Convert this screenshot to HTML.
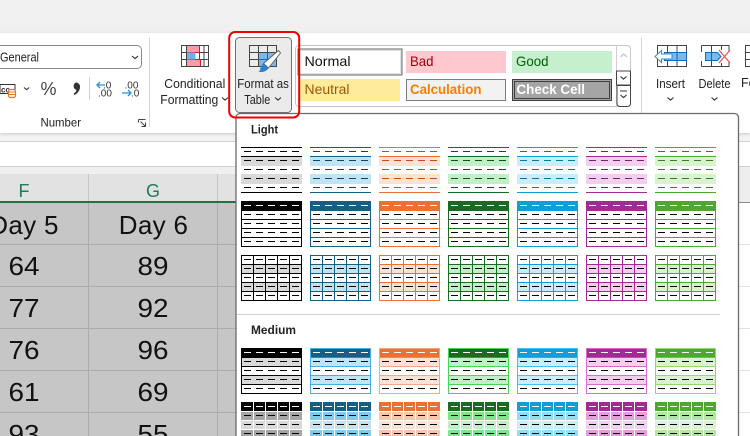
<!DOCTYPE html>
<html>
<head>
<meta charset="utf-8">
<style>
html,body{margin:0;padding:0;background:#fff;width:750px;height:436px;overflow:hidden}
svg{display:block}
text{font-family:"Liberation Sans",sans-serif;fill:#222;font-size:12.5px}
.big{font-size:26px;fill:#111;text-anchor:middle;letter-spacing:.3px}
.num{font-size:26px;fill:#111;text-anchor:middle}
.hd{font-size:18px;fill:#217a5a;text-anchor:middle}
.mid{text-anchor:middle}
.k{font-size:10px}
.st{font-size:14px}
.c1{--a:#000;--b:#d9d9d9;--d:#000;--c:#000;--e:#a6a6a6}
.c2{--a:#156082;--b:#c1e4f5;--d:#0f4761;--c:#45b0e1;--e:#83cbeb}
.c3{--a:#e97132;--b:#fbe2d5;--d:#c04f15;--c:#f1a983;--e:#f6c6ad}
.c4{--a:#196b24;--b:#c1f0c8;--d:#124f1a;--c:#47d459;--e:#83e28e}
.c5{--a:#0f9ed5;--b:#caedfb;--d:#0b769f;--c:#45c0f0;--e:#95dcf7}
.c6{--a:#a02b93;--b:#f2ceef;--d:#77206d;--c:#d86dcd;--e:#e59edc}
.c7{--a:#4ea72e;--b:#d9f2d0;--d:#3a7c22;--c:#8ed973;--e:#b4e5a2}
.ch{fill:none;stroke:#333;stroke-width:1.1}
.ds{stroke-dasharray:7 5;fill:none}
</style>
</head>
<body>
<svg width="750" height="436" viewBox="0 0 750 436" xmlns="http://www.w3.org/2000/svg">
<defs>
<filter id="sh" x="-5%" y="-5%" width="110%" height="110%"><feDropShadow dx="0" dy="1" stdDeviation="1.5" flood-color="#000" flood-opacity=".18"/></filter>
<g id="s1">
  <rect x="0" y="9" width="61" height="10" style="fill:var(--b)"/>
  <rect x="0" y="27" width="61" height="10" style="fill:var(--b)"/>
  <path d="M0 .5H61M0 9.5H61M0 45.5H61" fill="none" style="stroke:var(--a)"/>
  <path class="ds" d="M3 4.5H58M3 13.5H58M3 22.5H58M3 31.5H58M3 40.5H58" style="stroke:var(--d)"/>
</g>
<g id="s2">
  <rect x=".5" y=".5" width="60" height="45" fill="#fff" style="stroke:var(--a)"/>
  <rect x="0" y="0" width="61" height="10" style="fill:var(--a)"/>
  <path d="M0 18.5H61M0 27.5H61M0 36.5H61" fill="none" style="stroke:var(--a)"/>
  <path class="ds" d="M3 4.5H58" stroke="#fff"/>
  <path class="ds" d="M3 13.5H58M3 22.5H58M3 31.5H58M3 40.5H58" stroke="#000"/>
</g>
<g id="s3">
  <rect x=".5" y=".5" width="60" height="45" fill="#fff" style="stroke:var(--a)"/>
  <rect x="0" y="9" width="61" height="9" style="fill:var(--b)"/>
  <rect x="0" y="27" width="61" height="9" style="fill:var(--b)"/>
  <path d="M.5 .5H60.5V45.5H.5ZM0 9.5H61M0 18.5H61M0 27.5H61M0 36.5H61M12.5 0V46M24.5 0V46M36.5 0V46M48.5 0V46" fill="none" style="stroke:var(--a)"/>
  <path class="ds" d="M3 4.5H58M3 13.5H58M3 22.5H58M3 31.5H58M3 40.5H58" stroke="#000"/>
</g>
<g id="m1">
  <rect x=".5" y=".5" width="60" height="45" fill="#fff"/>
  <rect x="0" y="10" width="61" height="9" style="fill:var(--b)"/>
  <rect x="0" y="27" width="61" height="10" style="fill:var(--b)"/>
  <path d="M.5 .5H60.5V45.5H.5ZM0 18.5H61M0 27.5H61M0 36.5H61M0 9.5H61" fill="none" style="stroke:var(--c)"/>
  <rect x="1" y="1" width="59" height="8.5" style="fill:var(--a)"/>
  <path class="ds" d="M3 4.5H58" stroke="#fff"/>
  <path class="ds" d="M3 13.5H58M3 22.5H58M3 31.5H58M3 40.5H58" stroke="#000"/>
</g>
<g id="m2">
  <rect x="0" y="0" width="61" height="10" style="fill:var(--a)"/>
  <rect x="0" y="10" width="61" height="9" style="fill:var(--e)"/>
  <rect x="0" y="19" width="61" height="9" style="fill:var(--b)"/>
  <rect x="0" y="28" width="61" height="8" style="fill:var(--e)"/>
  <path d="M0 9.5H61M0 18.5H61M0 27.5H61M12.5 0V36M24.5 0V36M36.5 0V36M48.5 0V36" fill="none" stroke="#fff"/>
  <path class="ds" d="M3 4.5H58" stroke="#fff"/>
  <path class="ds" d="M3 13.5H58M3 22.5H58M3 31.5H58" stroke="#000"/>
</g>
</defs>

<!-- base -->
<rect width="750" height="436" fill="#fff"/>
<rect width="750" height="33" fill="#f0f0f0"/>
<rect y="133" width="750" height="8" fill="#f3f3f3"/>
<rect y="141" width="750" height="1" fill="#d0d0d0"/>
<rect y="166" width="750" height="1" fill="#d0d0d0"/>
<rect y="167" width="750" height="7" fill="#f0f0f0"/>
<rect y="174" width="750" height="28" fill="#e2e2e2"/>
<rect x="739" y="167" width="11" height="35" fill="#eee"/>
<rect x="739" y="202" width="11" height="1" fill="#8a8a8a"/>
<path d="M739 244.5H750M739 286.5H750M739 328.5H750M739 370.5H750M739 412.5H750" stroke="#e2e2e2"/>
<path d="M88.5 174V202M217.5 174V202" stroke="#c6c6c6"/>
<rect y="203" width="236" height="233" fill="#c6c6c6"/>
<rect y="201" width="236" height="2" fill="#217346"/>
<path d="M88.5 203V436M217.5 203V436M0 244.5H236M0 286.5H236M0 328.5H236M0 370.5H236M0 412.5H236" stroke="#adadad"/>
<text class="hd" x="24" y="197">F</text>
<text class="hd" x="153" y="197">G</text>
<text class="big" x="24" y="234">Day 5</text>
<text class="big" x="153.5" y="234">Day 6</text>
<text class="num" x="24" y="275" textLength="31" lengthAdjust="spacingAndGlyphs">64</text><text class="num" x="153" y="275" textLength="31" lengthAdjust="spacingAndGlyphs">89</text>
<text class="num" x="24" y="317" textLength="31" lengthAdjust="spacingAndGlyphs">77</text><text class="num" x="153" y="317" textLength="31" lengthAdjust="spacingAndGlyphs">92</text>
<text class="num" x="24" y="359" textLength="31" lengthAdjust="spacingAndGlyphs">76</text><text class="num" x="153" y="359" textLength="31" lengthAdjust="spacingAndGlyphs">96</text>
<text class="num" x="24" y="401" textLength="31" lengthAdjust="spacingAndGlyphs">61</text><text class="num" x="153" y="401" textLength="31" lengthAdjust="spacingAndGlyphs">69</text>
<text class="num" x="24" y="443" textLength="31" lengthAdjust="spacingAndGlyphs">93</text><text class="num" x="153" y="443" textLength="31" lengthAdjust="spacingAndGlyphs">55</text>

<!-- ribbon -->
<rect y="33" width="750" height="100" fill="#fff" filter="url(#sh)"/>
<path d="M-5 45.5H137a4.5 4.5 0 0 1 4.5 4.5V64a4.5 4.5 0 0 1-4.5 4.5H-5Z" fill="#fff" stroke="#8a8a8a"/>
<text x="0" y="61.5" textLength="39" lengthAdjust="spacingAndGlyphs">General</text>
<path class="ch" d="M132 56l3 2.6 3-2.6"/>
<!-- accounting -->
<rect x="0" y="84.5" width="15" height="9" fill="#fff" stroke="#333"/>
<text x="1" y="92.5" style="font-size:8px;font-weight:bold;fill:#333">cc</text>
<rect x="8.5" y="89.5" width="7" height="8" rx="2" fill="#fff" stroke="#e07a1f" stroke-width="1.2"/>
<path d="M8.5 92h7M8.5 94.5h7" stroke="#e07a1f"/>
<path class="ch" d="M24 87.5l2.6 2.2 2.6-2.2"/>
<text x="40.5" y="95" style="font-size:18px;fill:#444">%</text>
<path d="M76 82.5a4 4 0 0 1 4 4.5c0 3.5-2.5 6.5-5.500 8l-1-1.200c1.800-1.200 2.800-2.500 3-3.800a4 4 0 0 1-.5-7.500Z" fill="#333"/>
<rect x="89" y="77" width="1" height="23" fill="#d0d0d0"/>
<path d="M105 85H97M100 82l-3 3 3 3" fill="none" stroke="#2b8fd8" stroke-width="1.3"/>
<text class="k" x="103" y="88.5" style="fill:#333">.0</text>
<text class="k" x="98" y="96.5" style="fill:#333">.00</text>
<text class="k" x="124.5" y="88.5" style="fill:#333">.00</text>
<path d="M122 93h9M128 90l3 3-3 3" fill="none" stroke="#2b8fd8" stroke-width="1.3"/>
<text class="k" x="131" y="96.5" style="fill:#333">.0</text>
<text x="40.5" y="126.5" style="font-size:12px" textLength="40.5" lengthAdjust="spacingAndGlyphs">Number</text>
<path d="M138.500 119.500h7M138.500 119.500v3M140.500 121.500l5 5M145.500 122.500v4h-4" fill="none" stroke="#444"/>
<rect x="149" y="38" width="1" height="89" fill="#d4d4d4"/>

<!-- conditional -->
<rect x="186.5" y="45.5" width="13" height="7" fill="#ff9aa8" stroke="#e81123"/>
<rect x="186.5" y="59.5" width="14" height="7" fill="#ff9aa8" stroke="#e81123"/>
<rect x="186.5" y="52.5" width="9" height="7" fill="#6fb1e8"/>
<path d="M181.5 45.5H208.5V66.5H181.5ZM181.5 52.5H186M199.5 52.5H208.5M181.5 59.5H186M200.5 59.5H208.5M186.5 45.5V66.5M204 45.5V66.5M199.5 52.5V59.5" fill="none" stroke="#444"/>
<text x="164.3" y="88" textLength="61" lengthAdjust="spacingAndGlyphs">Conditional</text>
<text x="160.3" y="104" textLength="58" lengthAdjust="spacingAndGlyphs">Formatting</text>
<path class="ch" d="M222 97.5l3 2.6 3-2.6"/>

<!-- format as table button -->
<rect x="235.5" y="37.5" width="56" height="75" rx="4" fill="#ebebeb" stroke="#707070"/>
<rect x="258.5" y="52.5" width="18" height="14" fill="#7cb7ec" stroke="#0f6cbd"/>
<path d="M249.5 45.5H276.5V66.5H249.5ZM249.5 52.5H258.5M249.5 59.5H258.5M258.5 45.5V66.5M267.5 45.5V52.5M258.5 52.5H276.5" fill="none" stroke="#444"/>
<path d="M267.5 52.5V66.5M258.5 59.5H276.5" stroke="#0f6cbd"/>
<path d="M278.5 50.5l2 2.5L268.5 68l-5-4.500Z" fill="#fff" stroke="#666"/>
<path d="M263.5 63.5l5 4.500c-1.500 3-5.500 4.800-10 3.700 2-1 1.500-3 2.300-5 .5-1.300 1.500-2.500 2.700-3.200Z" fill="#2d83c9"/>
<text x="237.3" y="88" textLength="51.5" lengthAdjust="spacingAndGlyphs">Format as</text>
<text x="244.3" y="104" textLength="26" lengthAdjust="spacingAndGlyphs">Table</text>
<path class="ch" d="M275 97.5l3 2.6 3-2.6"/>

<!-- styles gallery -->
<path d="M299 45.5H627a3.5 3.5 0 0 1 3.5 3.5v54a3.5 3.5 0 0 1-3.5 3.5H299a3.5 3.5 0 0 1-3.5-3.5V49a3.5 3.5 0 0 1 3.5-3.5Z" fill="#fff" stroke="#c8c8c8"/>
<rect x="297.5" y="48.5" width="105" height="27" fill="#6b6b6b"/>
<rect x="298.5" y="49.5" width="103" height="25" fill="#e2e2e2"/>
<rect x="300" y="51" width="100" height="22" fill="#fff"/>
<text class="st" x="304.5" y="66" style="fill:#111" textLength="46" lengthAdjust="spacingAndGlyphs">Normal</text>
<rect x="406" y="51" width="100" height="22" fill="#ffc7ce"/>
<text class="st" x="410" y="66" style="fill:#9c0006" textLength="23.5" lengthAdjust="spacingAndGlyphs">Bad</text>
<rect x="512" y="51" width="100" height="22" fill="#c6efce"/>
<text class="st" x="516" y="66" style="fill:#006100" textLength="32.5" lengthAdjust="spacingAndGlyphs">Good</text>
<rect x="300" y="79" width="100" height="22" fill="#ffeb9c"/>
<text class="st" x="304.5" y="94" style="fill:#9c5700" textLength="45" lengthAdjust="spacingAndGlyphs">Neutral</text>
<rect x="406.5" y="79.5" width="99" height="21" fill="#f2f2f2" stroke="#7f7f7f"/>
<text class="st" x="410" y="94" style="font-weight:bold;fill:#fa7d00" textLength="71.5" lengthAdjust="spacingAndGlyphs">Calculation</text>
<rect x="512.5" y="79.5" width="99" height="21" fill="#a5a5a5" stroke="#3f3f3f"/>
<rect x="514.5" y="81.5" width="95" height="17" fill="none" stroke="#3f3f3f"/>
<text class="st" x="516.5" y="94" style="font-weight:bold;fill:#fff" textLength="68.5" lengthAdjust="spacingAndGlyphs">Check Cell</text>
<path d="M616.5 45.5V106.5" stroke="#d0d0d0"/>
<path d="M620.5 57l3.2-3 3.2 3" fill="none" stroke="#c4c4c4" stroke-width="1.2"/>
<rect x="616.5" y="71" width="14" height="14" fill="#fff" stroke="#444"/>
<path class="ch" d="M620.5 76.5l3 2.6 3-2.6"/>
<path d="M617 85.5V103.5a3 3 0 0 0 3 3H627.5a3 3 0 0 0 3-3V85.5Z" fill="#fff" stroke="#444"/>
<path d="M620 91H627" stroke="#333"/>
<path class="ch" d="M620.5 95l3 2.6 3-2.6"/>
<rect x="641" y="38" width="1" height="76" fill="#d4d4d4"/>

<!-- insert -->
<path d="M657.5 45.5H686.5V66.5H657.5ZM667.5 45.5V66.5M677 45.5V52M677 60V66.5" fill="none" stroke="#444"/>
<rect x="664.5" y="52.5" width="22" height="8" fill="#7cb7ec" stroke="#0f6cbd"/>
<path d="M677 52.5V60.5" stroke="#0f6cbd"/>
<path d="M655 56.5L661.5 50.5V54H672V59H661.5V62.5Z" fill="#fff" stroke="#2b8fd8"/>
<text class="mid" x="670.5" y="88" textLength="29" lengthAdjust="spacingAndGlyphs">Insert</text>
<path class="ch" d="M667.5 97.5l3 2.6 3-2.6"/>
<!-- delete -->
<path d="M701.5 45.5H729V52M701.5 66.5H729V61M701.5 45.5V52M701.5 61V66.5M711.5 45.5V52M711.5 61V66.5M721.5 45.5V50M721.5 63V66.5" fill="none" stroke="#444"/>
<path d="M705.5 52.5H717.5L721 56.5 717.5 60.5H705.5Z" fill="#7cb7ec" stroke="#0f6cbd"/>
<path d="M711.5 52.5V60.5" stroke="#0f6cbd"/>
<path d="M719 50L730 63M730 50L719 63" stroke="#f0505a" stroke-width="1.3"/>
<text class="mid" x="714.5" y="88" textLength="32" lengthAdjust="spacingAndGlyphs">Delete</text>
<path class="ch" d="M711.5 97.5l3 2.6 3-2.6"/>
<!-- format partial -->
<path d="M750 45.5H745.5V66.5H750M745.5 52.5H750M745.5 59.5H750" fill="none" stroke="#444"/>
<text x="741" y="87">Fo</text>

<!-- menu panel -->
<path d="M236 440V117.5a4 4 0 0 1 4-4H734.5a4 4 0 0 1 4 4V440Z" fill="#fff" stroke="#6b6b6b" stroke-width="1.3"/>
<rect x="237" y="314" width="483" height="1" fill="#cfcfcf"/>
<text x="251" y="133.5" style="font-size:12px;font-weight:bold;fill:#222" textLength="27" lengthAdjust="spacingAndGlyphs">Light</text>
<text x="251" y="334" style="font-size:12px;font-weight:bold;fill:#222" textLength="45" lengthAdjust="spacingAndGlyphs">Medium</text>

<use href="#s1" class="c1" x="241" y="147"/><use href="#s1" class="c2" x="310" y="147"/><use href="#s1" class="c3" x="379" y="147"/><use href="#s1" class="c4" x="448" y="147"/><use href="#s1" class="c5" x="517" y="147"/><use href="#s1" class="c6" x="586" y="147"/><use href="#s1" class="c7" x="655" y="147"/>
<use href="#s2" class="c1" x="241" y="201"/><use href="#s2" class="c2" x="310" y="201"/><use href="#s2" class="c3" x="379" y="201"/><use href="#s2" class="c4" x="448" y="201"/><use href="#s2" class="c5" x="517" y="201"/><use href="#s2" class="c6" x="586" y="201"/><use href="#s2" class="c7" x="655" y="201"/>
<use href="#s3" class="c1" x="241" y="255"/><use href="#s3" class="c2" x="310" y="255"/><use href="#s3" class="c3" x="379" y="255"/><use href="#s3" class="c4" x="448" y="255"/><use href="#s3" class="c5" x="517" y="255"/><use href="#s3" class="c6" x="586" y="255"/><use href="#s3" class="c7" x="655" y="255"/>
<use href="#m1" class="c1" x="241" y="348"/><use href="#m1" class="c2" x="310" y="348"/><use href="#m1" class="c3" x="379" y="348"/><use href="#m1" class="c4" x="448" y="348"/><use href="#m1" class="c5" x="517" y="348"/><use href="#m1" class="c6" x="586" y="348"/><use href="#m1" class="c7" x="655" y="348"/>
<use href="#m2" class="c1" x="241" y="402"/><use href="#m2" class="c2" x="310" y="402"/><use href="#m2" class="c3" x="379" y="402"/><use href="#m2" class="c4" x="448" y="402"/><use href="#m2" class="c5" x="517" y="402"/><use href="#m2" class="c6" x="586" y="402"/><use href="#m2" class="c7" x="655" y="402"/>

<!-- red highlight -->
<rect x="229.2" y="32" width="70" height="85.5" rx="6" fill="none" stroke="#f00000" stroke-width="2"/>
</svg>
</body>
</html>
